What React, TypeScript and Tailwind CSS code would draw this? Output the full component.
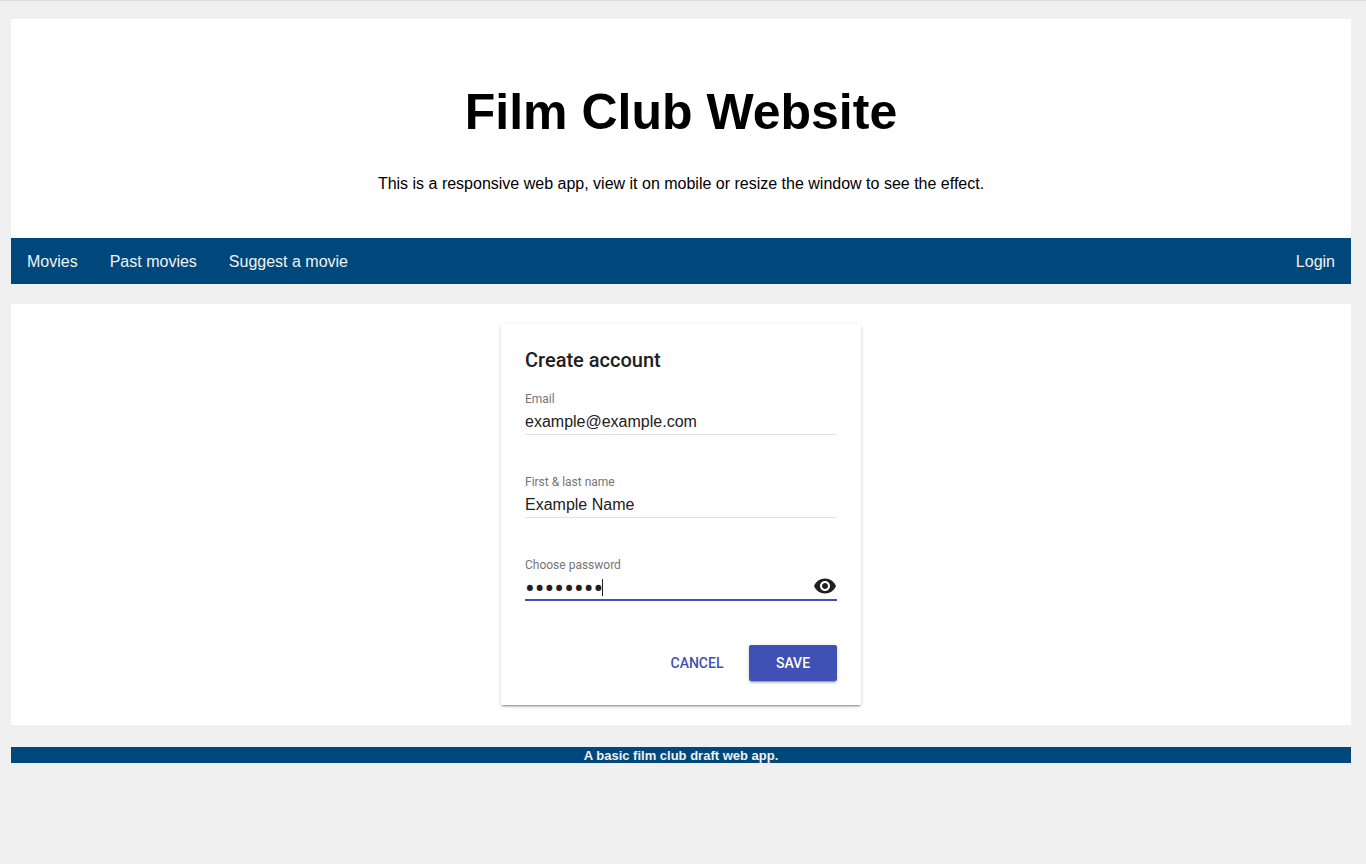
import { useState } from 'react';

const links = ['Movies', 'Past movies', 'Suggest a movie'];

function Field({ id, label, type, initial }: { id: string; label: string; type: string; initial: string }) {
  const [value, setValue] = useState(initial);
  return (
    <div className="mb-10 flex flex-col">
      <label htmlFor={id} className="font-['Roboto',sans-serif] text-xs leading-[14px] text-[#757575]">
        {label}
      </label>
      <input
        id={id}
        type={type}
        value={value}
        onChange={(e) => setValue(e.target.value)}
        className="h-[29px] w-full border-b border-[#e0e0e0] bg-transparent pt-1 text-base text-[#212121] outline-none"
      />
    </div>
  );
}

function PasswordField() {
  const [value, setValue] = useState('password');
  const [visible, setVisible] = useState(false);
  return (
    <div className="mb-11 flex flex-col">
      <label htmlFor="password" className="font-['Roboto',sans-serif] text-xs leading-[14px] text-[#757575]">
        Choose password
      </label>
      <div className="relative flex h-[29px] items-center border-b-2 border-[#3f51b5]">
        <input
          id="password"
          type={visible ? 'text' : 'password'}
          value={value}
          onChange={(e) => setValue(e.target.value)}
          className={
            visible
              ? 'h-full min-w-0 flex-1 bg-transparent text-base text-[#212121] outline-none'
              : "h-full min-w-0 flex-1 bg-transparent pt-1.5 font-['Roboto',sans-serif] text-[29px] text-[#212121] caret-transparent outline-none"
          }
        />
        {!visible && <span className="absolute top-[7px] left-[77px] h-[17px] w-px bg-[#212121]" />}
        <button type="button" aria-label="Show password" onClick={() => setVisible(!visible)} className="text-[#212121]">
          <svg viewBox="0 0 24 24" className="size-6" fill="currentColor" aria-hidden="true">
            <path d="M12 4.5C7 4.5 2.73 7.61 1 12c1.73 4.39 6 7.5 11 7.5s9.27-3.11 11-7.5c-1.73-4.39-6-7.5-11-7.5zM12 17c-2.76 0-5-2.24-5-5s2.24-5 5-5 5 2.24 5 5-2.24 5-5 5zm0-8c-1.66 0-3 1.34-3 3s1.34 3 3 3 3-1.34 3-3-1.34-3-3-3z" />
          </svg>
        </button>
      </div>
    </div>
  );
}

export default function App() {
  return (
    <div className="min-h-screen border-t border-[#dddddd] bg-[#f0f0f0] pt-[18px] pr-[15px] pb-5 pl-[11px] font-['Liberation_Sans',Arial,sans-serif] text-base text-black">
      <header className="bg-white px-8 pt-[65px] pb-[45px] text-center">
        <h1 className="text-[50px] leading-[57px] font-bold">Film Club Website</h1>
        <p className="mt-[34px] leading-[18px]">This is a responsive web app, view it on mobile or resize the window to see the effect.</p>
      </header>

      <nav className="flex flex-wrap bg-[#00487c] leading-[18px] text-[#f2f2f2]">
        {links.map((link) => (
          <a key={link} href="#" className="px-4 pt-[15px] pb-[13px]">
            {link}
          </a>
        ))}
        <a href="#" className="ml-auto px-4 pt-[15px] pb-[13px]">
          Login
        </a>
      </nav>

      <main className="mt-5 flex justify-center bg-white p-5">
        <form
          onSubmit={(e) => e.preventDefault()}
          className="w-full max-w-[360px] rounded-xs bg-white p-6 shadow-[0_2px_2px_0_rgba(0,0,0,0.14),0_3px_1px_-2px_rgba(0,0,0,0.2),0_1px_5px_0_rgba(0,0,0,0.12)]"
        >
          <h2 className="mb-5 font-['Roboto',sans-serif] text-xl leading-6 font-medium text-[#212121]">Create account</h2>
          <Field id="email" label="Email" type="email" initial="example@example.com" />
          <Field id="name" label="First & last name" type="text" initial="Example Name" />
          <PasswordField />
          <div className="flex justify-end gap-2 font-['Roboto',sans-serif] text-sm font-medium">
            <button type="button" className="h-9 min-w-[88px] rounded-xs px-4 text-[#3f51b5] uppercase">
              Cancel
            </button>
            <button
              type="submit"
              className="h-9 min-w-[88px] rounded-xs bg-[#3f51b5] px-4 text-white uppercase shadow-[0_2px_2px_0_rgba(0,0,0,0.14),0_3px_1px_-2px_rgba(0,0,0,0.2),0_1px_5px_0_rgba(0,0,0,0.12)]"
            >
              Save
            </button>
          </div>
        </form>
      </main>

      <footer className="mt-[22px] bg-[#00487c] pt-0.5 text-center text-[13px] leading-[14px] font-bold text-[#f2f2f2]">
        A basic film club draft web app.
      </footer>
    </div>
  );
}
